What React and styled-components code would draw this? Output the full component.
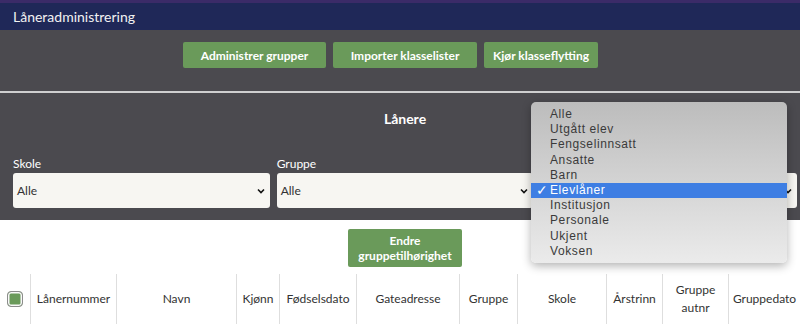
import React from "react"
import styled, { createGlobalStyle } from "styled-components"

const GlobalStyle = createGlobalStyle`
  body {
    margin: 0;
    font-family: Lato, "Open Sans", sans-serif;
    background: #ffffff;
    overflow: hidden;
  }
`

const Page = styled.div`
  position: relative;
  width: 800px;
  height: 324px;
  overflow: hidden;
`

const TopBar = styled.header`
  border-top: 3px solid #3b2b68;
  background: #1f2858;
  height: 27px;
  padding-left: 13px;
  display: flex;
  align-items: center;
  color: #f2f2f2;
  font-size: 14px;
`

const Panel = styled.section`
  background: #4b4a4f;
  padding: 12px 3px 12px 13px;
`

const ButtonRow = styled.div`
  display: flex;
  justify-content: center;
  gap: 7px;
  padding-right: 29px;
`

const GreenButton = styled.button`
  background: #6a9a5a;
  color: #ffffff;
  border: none;
  border-radius: 2px;
  font-family: Lato, "Open Sans", sans-serif;
  font-weight: 700;
  font-size: 12px;
  height: ${(p) => (p.$tall ? "38px" : "26px")};
  width: ${(p) => p.$w}px;
  line-height: 15px;
  padding: 0 8px;
`

const Divider = styled.hr`
  border: none;
  height: 2px;
  background: #cfcfd0;
  margin: 23px -3px 0 -13px;
`

const Heading = styled.h2`
  margin: 17px 0 0;
  text-align: center;
  color: #ffffff;
  font-size: 14px;
  font-weight: 700;
`

const Filters = styled.div`
  display: grid;
  grid-template-columns: repeat(3, 1fr);
  gap: 7px;
  margin-top: 30px;
`

const Field = styled.label`
  display: flex;
  flex-direction: column;
  gap: 2px;
`

const LabelText = styled.span`
  height: 14px;
  line-height: 14px;
  color: #ffffff;
  font-size: 12px;
`

const SelectBox = styled.div`
  height: 35px;
  background: #f7f6f2;
  border-radius: 3px;
  display: flex;
  align-items: center;
  justify-content: space-between;
  padding: 0 4px 0 4px;
  color: #333;
  font-size: 12px;
`

const Content = styled.div`
  padding-top: 9px;
`

const CenterRow = styled.div`
  display: flex;
  justify-content: center;
  padding-left: 10px;
`

const Table = styled.div`
  display: grid;
  grid-template-columns: 30px 86px 120px 43px 77px 103px 58px 89px 56px 66px 72px;
  margin-top: 7px;
  height: 50px;
`

const HeadCell = styled.div`
  display: flex;
  align-items: center;
  justify-content: center;
  text-align: center;
  border-left: ${(p) => (p.$first ? "none" : "1px solid #dedede")};
  color: #333;
  font-size: 12px;
  line-height: 18px;
`

const CheckBox = styled.span`
  box-sizing: border-box;
  width: 16px;
  height: 16px;
  margin-right: 1px;
  background: #6a9a5a;
  border: 1px solid #8c8c8c;
  box-shadow: inset 0 0 0 1.5px #f8f8f8;
  border-radius: 4px;
`

const Menu = styled.ul`
  position: absolute;
  left: 531px;
  top: 102px;
  width: 256px;
  margin: 0;
  padding: 5px 0 4px;
  list-style: none;
  border-radius: 5px;
  background: linear-gradient(#bcbcbc, #ebebeb);
  box-shadow: 0 3px 10px rgba(0, 0, 0, 0.3);
  font-family: "Liberation Sans", Arial, sans-serif;
  font-size: 12px;
  letter-spacing: 0.6px;
`

const MenuItem = styled.li`
  height: 15.2px;
  line-height: 15px;
  padding-left: 19px;
  position: relative;
  color: ${(p) => (p.$active ? "#ffffff" : "#3a3a3a")};
  background: ${(p) => (p.$active ? "#3e7ee3" : "transparent")};
`

const Tick = styled.span`
  position: absolute;
  left: 5px;
  top: 0;
  font-size: 14px;
`

const Chevron = () => (
  <svg width="10" height="10" viewBox="0 0 10 10">
    <path d="M2 3.5 L5 6.5 L8 3.5" fill="none" stroke="#111" strokeWidth="1.6" />
  </svg>
)

const options = [
  "Alle",
  "Utgått elev",
  "Fengselinnsatt",
  "Ansatte",
  "Barn",
  "Elevlåner",
  "Institusjon",
  "Personale",
  "Ukjent",
  "Voksen",
]

const columns = [
  "Lånernummer",
  "Navn",
  "Kjønn",
  "Fødselsdato",
  "Gateadresse",
  "Gruppe",
  "Skole",
  "Årstrinn",
  "Gruppe autnr",
  "Gruppedato",
]

// the third filter sits under the open menu, so its texts stay empty
const filters = [
  { label: "Skole", value: "Alle" },
  { label: "Gruppe", value: "Alle" },
  { label: "", value: "" },
]

export default function App() {
  return (
    <Page>
      <GlobalStyle />
      <TopBar>Låneradministrering</TopBar>
      <Panel>
        <ButtonRow>
          <GreenButton $w={143}>Administrer grupper</GreenButton>
          <GreenButton $w={144}>Importer klasselister</GreenButton>
          <GreenButton $w={114}>Kjør klasseflytting</GreenButton>
        </ButtonRow>
        <Divider />
        <Heading>Lånere</Heading>
        <Filters>
          {filters.map((f, i) => (
            <Field key={i}>
              <LabelText>{f.label}</LabelText>
              <SelectBox>
                <span>{f.value}</span>
                <Chevron />
              </SelectBox>
            </Field>
          ))}
        </Filters>
      </Panel>
      <Content>
        <CenterRow>
          <GreenButton $tall $w={114}>
            Endre
            <br />
            gruppetilhørighet
          </GreenButton>
        </CenterRow>
        <Table>
          <HeadCell $first>
            <CheckBox />
          </HeadCell>
          {columns.map((c) => (
            <HeadCell key={c}>
              {c === "Gruppe autnr" ? (
                <span>
                  Gruppe
                  <br />
                  autnr
                </span>
              ) : (
                c
              )}
            </HeadCell>
          ))}
        </Table>
      </Content>
      <Menu>
        {options.map((o) => (
          <MenuItem key={o} $active={o === "Elevlåner"}>
            {o === "Elevlåner" && <Tick>✓</Tick>}
            {o}
          </MenuItem>
        ))}
      </Menu>
    </Page>
  )
}
